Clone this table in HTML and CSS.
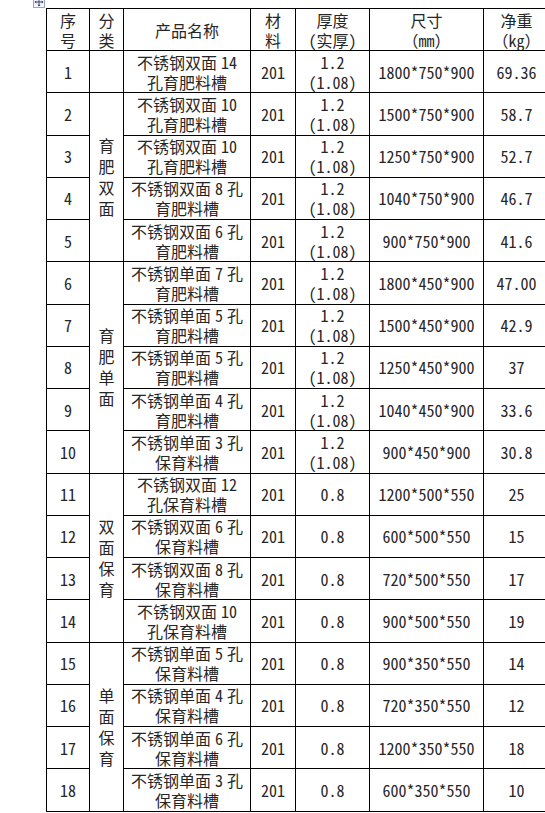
FILE: index.html
```html
<!DOCTYPE html>
<html lang="zh">
<head>
<meta charset="utf-8">
<link rel="stylesheet" href="styles.css">
<title>料槽</title>
</head>
<body>
<div class="page">
  <span class="handle"><svg width="12" height="12" viewBox="0 0 12 12"><rect x="0.5" y="0.5" width="11" height="11" fill="#f4f6fb" stroke="#9aa6bf"/><path d="M6 2v8M2 6h8" stroke="#3b4a6b" stroke-width="1"/><path d="M6 1.5l-1.6 1.8h3.2zM6 10.5l-1.6-1.8h3.2zM1.5 6l1.8-1.6v3.2zM10.5 6l-1.8-1.6v3.2z" fill="#3b4a6b"/></svg></span>
  <table class="sheet">
    <colgroup>
      <col class="c1"><col class="c2"><col class="c3"><col class="c4"><col class="c5"><col class="c6"><col class="c7">
    </colgroup>
    <tr class="head">
      <td>序<br>号</td><td>分<br>类</td><td>产品名称</td><td>材<br>料</td><td>厚度<br>(实厚)</td><td>尺寸<br>（mm）</td><td>净重<br>（kg）</td>
    </tr>
    <tr><td>1</td><td></td><td>不锈钢双面&#8197;14<br>孔育肥料槽</td><td>201</td><td>1.2<br>(1.08)</td><td>1800*750*900</td><td>69.36</td></tr>
    <tr><td>2</td><td rowspan="4" class="cat">育肥双面</td><td>不锈钢双面&#8197;10<br>孔育肥料槽</td><td>201</td><td>1.2<br>(1.08)</td><td>1500*750*900</td><td>58.7</td></tr>
    <tr><td>3</td><td>不锈钢双面&#8197;10<br>孔育肥料槽</td><td>201</td><td>1.2<br>(1.08)</td><td>1250*750*900</td><td>52.7</td></tr>
    <tr><td>4</td><td>不锈钢双面&#8197;8&#8197;孔<br>育肥料槽</td><td>201</td><td>1.2<br>(1.08)</td><td>1040*750*900</td><td>46.7</td></tr>
    <tr><td>5</td><td>不锈钢双面&#8197;6&#8197;孔<br>育肥料槽</td><td>201</td><td>1.2<br>(1.08)</td><td>900*750*900</td><td>41.6</td></tr>
    <tr><td>6</td><td rowspan="5" class="cat">育肥单面</td><td>不锈钢单面&#8197;7&#8197;孔<br>育肥料槽</td><td>201</td><td>1.2<br>(1.08)</td><td>1800*450*900</td><td>47.00</td></tr>
    <tr><td>7</td><td>不锈钢单面&#8197;5&#8197;孔<br>育肥料槽</td><td>201</td><td>1.2<br>(1.08)</td><td>1500*450*900</td><td>42.9</td></tr>
    <tr><td>8</td><td>不锈钢单面&#8197;5&#8197;孔<br>育肥料槽</td><td>201</td><td>1.2<br>(1.08)</td><td>1250*450*900</td><td>37</td></tr>
    <tr><td>9</td><td>不锈钢单面&#8197;4&#8197;孔<br>育肥料槽</td><td>201</td><td>1.2<br>(1.08)</td><td>1040*450*900</td><td>33.6</td></tr>
    <tr><td>10</td><td>不锈钢单面&#8197;3&#8197;孔<br>保育料槽</td><td>201</td><td>1.2<br>(1.08)</td><td>900*450*900</td><td>30.8</td></tr>
    <tr><td>11</td><td rowspan="4" class="cat">双面保育</td><td>不锈钢双面&#8197;12<br>孔保育料槽</td><td>201</td><td>0.8</td><td>1200*500*550</td><td>25</td></tr>
    <tr><td>12</td><td>不锈钢双面&#8197;6&#8197;孔<br>保育料槽</td><td>201</td><td>0.8</td><td>600*500*550</td><td>15</td></tr>
    <tr><td>13</td><td>不锈钢双面&#8197;8&#8197;孔<br>保育料槽</td><td>201</td><td>0.8</td><td>720*500*550</td><td>17</td></tr>
    <tr><td>14</td><td>不锈钢双面&#8197;10<br>孔保育料槽</td><td>201</td><td>0.8</td><td>900*500*550</td><td>19</td></tr>
    <tr><td>15</td><td rowspan="4" class="cat">单面保育</td><td>不锈钢单面&#8197;5&#8197;孔<br>保育料槽</td><td>201</td><td>0.8</td><td>900*350*550</td><td>14</td></tr>
    <tr><td>16</td><td>不锈钢单面&#8197;4&#8197;孔<br>保育料槽</td><td>201</td><td>0.8</td><td>720*350*550</td><td>12</td></tr>
    <tr><td>17</td><td>不锈钢单面&#8197;6&#8197;孔<br>保育料槽</td><td>201</td><td>0.8</td><td>1200*350*550</td><td>18</td></tr>
    <tr><td>18</td><td>不锈钢单面&#8197;3&#8197;孔<br>保育料槽</td><td>201</td><td>0.8</td><td>600*350*550</td><td>10</td></tr>
  </table>
</div>
</body>
</html>
```

FILE: styles.css
```css
html, body {
  margin: 0;
  padding: 0;
  background: #ffffff;
  overflow: hidden;
}
.page {
  position: relative;
  padding: 8px 0 0 46px;
  font-family: "Noto Sans Mono CJK SC", "Noto Sans CJK SC", "Liberation Mono", monospace;
  font-size: 16px;
  color: #262626;
}
.handle {
  position: absolute;
  left: 33px;
  top: -4px;
  width: 12px;
  height: 12px;
  line-height: 0;
}
.sheet {
  border-collapse: collapse;
  table-layout: fixed;
  width: 503px;
}
.c1 { width: 43px; }
.c2 { width: 34px; }
.c3 { width: 127px; }
.c4 { width: 45px; }
.c5 { width: 74px; }
.c6 { width: 114px; }
.c7 { width: 66px; }
.sheet tr { height: 42.26px; }
.sheet .head { height: 42px; }
.sheet td {
  border: 1px solid #000;
  padding: 0 4px;
  text-align: center;
  vertical-align: middle;
  line-height: 20px;
  white-space: nowrap;
  overflow: hidden;
}
.sheet td.cat {
  white-space: normal;
  line-height: 21px;
  word-break: break-all;
  padding: 0 7px;
}
```
